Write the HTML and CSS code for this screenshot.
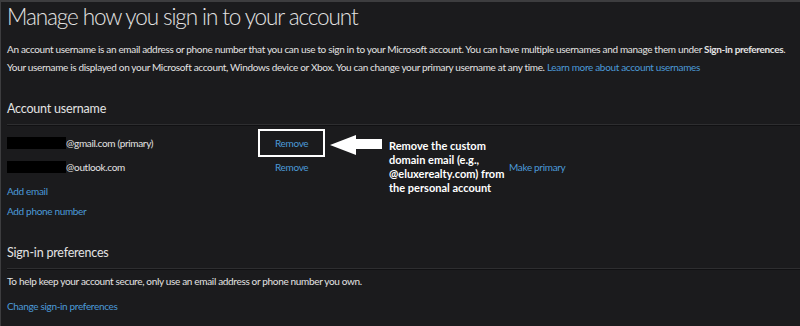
FILE: index.html
```html
<!DOCTYPE html>
<html lang="en">
  <head>
    <meta charset="UTF-8">
    <meta name="viewport" content="width=device-width, initial-scale=1.0">
    <title>Manage how you sign in</title>
    <link rel="stylesheet" href="styles.css">
  </head>
  <body>
    <div class="page">
      <h1>Manage how you sign in to your account</h1>
      <p class="intro first">An account username is an email address or phone number that you can use to sign in to your Microsoft account. You can have multiple usernames and manage them under <b>Sign-in preferences</b>.</p>
      <p class="intro">Your username is displayed on your Microsoft account, Windows device or Xbox. You can change your primary username at any time. <a href="#">Learn more about account usernames</a></p>

      <h2>Account username</h2>
      <div class="usernames">
        <div class="email"><span class="redact"></span>@gmail.com (primary)</div>
        <div class="action"><a href="#" class="boxed">Remove</a></div>
        <div class="extra"></div>

        <div class="email"><span class="redact"></span>@outlook.com</div>
        <div class="action"><a href="#">Remove</a></div>
        <div class="extra"><a href="#">Make primary</a></div>
      </div>
      <div class="adds">
        <a href="#">Add email</a>
        <a href="#">Add phone number</a>
      </div>

      <h2 class="prefs">Sign-in preferences</h2>
      <p class="intro secure">To help keep your account secure, only use an email address or phone number you own.</p>
      <a href="#" class="change">Change sign-in preferences</a>

      <!-- annotation laid over the screenshot -->
      <div class="note">
        <svg class="arrow" width="52" height="20" viewBox="0 0 52 20">
          <polygon points="0,10 26,0 26,4 52,4 52,14 26,14 26,20" fill="#fff"/>
        </svg>
        <div class="note-text">Remove the custom<br>domain email (e.g.,<br>@eluxerealty.com) from<br>the personal account</div>
      </div>
    </div>
  </body>
</html>
```

FILE: styles.css
```css
html, body {
  margin: 0;
  padding: 0;
  height: 100%;
}

body {
  background-color: #1b1b1d;
  color: #e3e3e3;
  font-family: Lato, "Open Sans", Arial, sans-serif;
  font-size: 10px;
  letter-spacing: -0.33px;
  border-top: 2px solid #3d3d3f;
  border-left: 1px solid #3d3d3f;
  box-sizing: border-box;
  overflow: hidden;
}

a {
  color: #4b9ad8;
  text-decoration: none;
}

.page {
  position: relative;
  padding-left: 6px;
}

h1 {
  margin: 0;
  font-size: 22.5px;
  font-weight: 300;
  letter-spacing: -1.1px;
  line-height: 30px;
}

.intro {
  margin: 4px 0 0;
  line-height: 14px;
  white-space: nowrap;
}

.intro.first {
  margin-top: 10px;
}

h2 {
  margin: 25px 0 0;
  padding-bottom: 5px;
  font-size: 12.5px;
  font-weight: 400;
  letter-spacing: -0.2px;
  line-height: 20px;
  border-bottom: 1px solid #2e2e30;
  box-shadow: 0 1px 0 #111113;
}

.usernames {
  display: grid;
  grid-template-columns: 268px 234px 1fr;
  grid-auto-rows: 24px;
  align-items: center;
  margin-top: 6px;
}

.email {
  display: flex;
  align-items: center;
}

.redact {
  display: inline-block;
  width: 59px;
  height: 12px;
  background: #000;
}

.boxed {
  display: inline-block;
  padding: 5px 15px;
  margin-left: -17px;
  line-height: 14px;
  border: 2px solid #fff;
}

.adds {
  display: flex;
  flex-direction: column;
  gap: 6px;
  margin-top: 5px;
  line-height: 14px;
}

.prefs {
  margin-top: 25px;
}

.intro.secure {
  margin-top: 5px;
}

.change {
  display: block;
  margin-top: 11px;
  line-height: 14px;
}

.note {
  position: absolute;
  left: 329px;
  top: 131px;
  display: flex;
  align-items: flex-start;
}

.arrow {
  margin-top: 2px;
}

.note-text {
  margin-left: 7px;
  margin-top: 6px;
  font-weight: 700;
  font-size: 11px;
  letter-spacing: 0;
  line-height: 14px;
  color: #fff;
}
```
